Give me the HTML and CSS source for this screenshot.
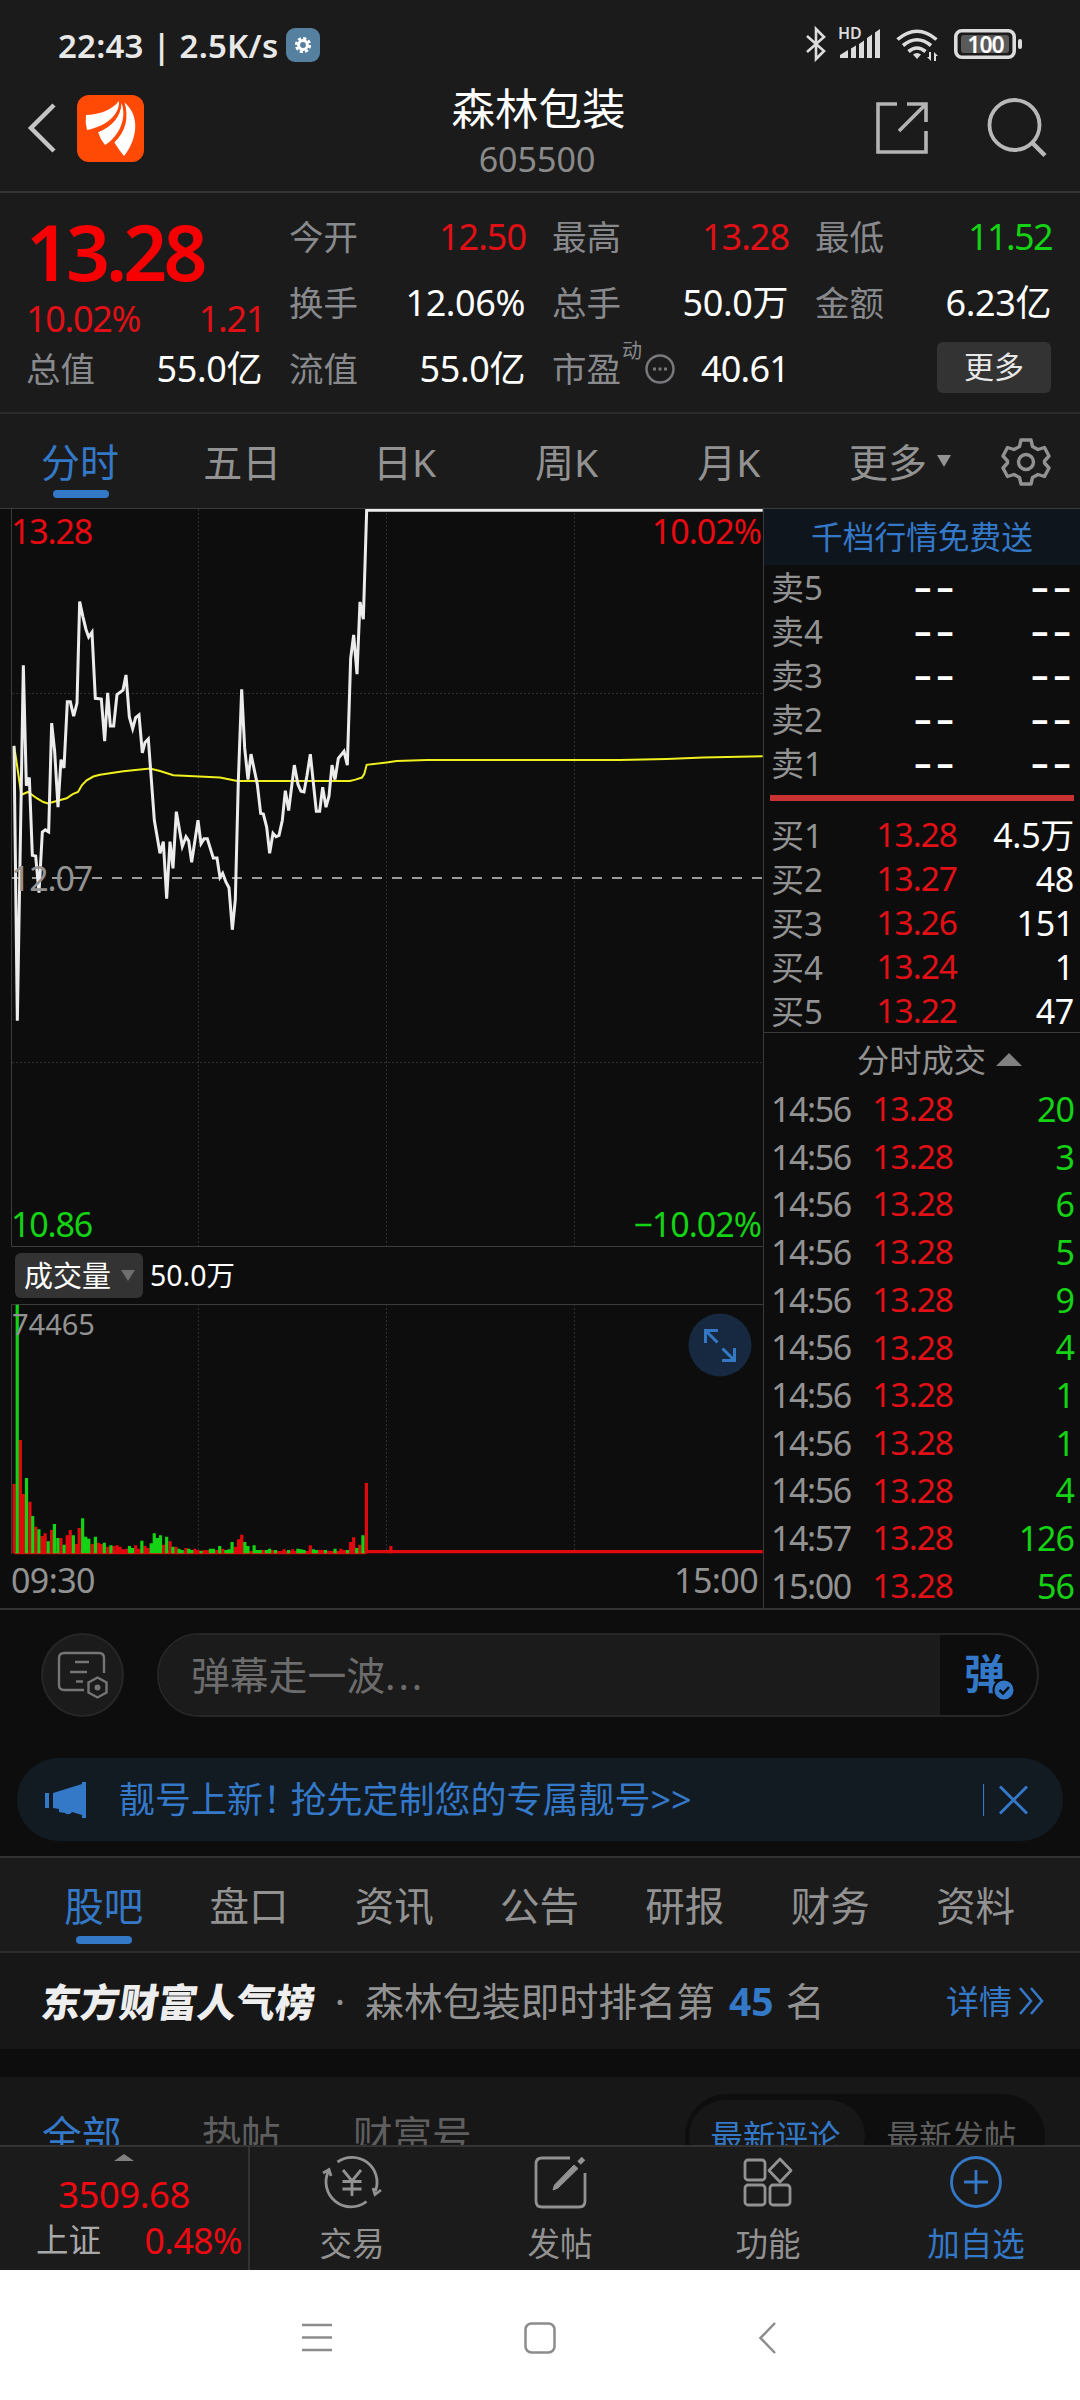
FILE: index.html
```html
<!DOCTYPE html>
<html lang="zh-CN">

<head>
    <meta charset="UTF-8">
    <meta name="viewport" content="width=device-width, initial-scale=1.0">
    <title>森林包装 605500</title>
    <link rel="stylesheet" href="styles.css">
</head>

<body>
    <div class="phone">
        <!--状态栏-->
        <div class="status">
            <span class="time">22:43 | 2.5K/s</span>
            <svg class="gear-app" width="34" height="34" viewBox="0 0 34 34">
                <rect width="34" height="34" rx="9" fill="#55809f"/>
                <circle cx="17" cy="17" r="6.8" fill="none" stroke="#fff" stroke-width="2.6" stroke-dasharray="3.2 2.14"/>
                <circle cx="17" cy="17" r="4.4" fill="none" stroke="#fff" stroke-width="3"/>
            </svg>
            <svg class="status-icons" width="220" height="40" viewBox="0 0 220 40">
                <path d="M5 11L22 26L14 34V4L22 12L5 27" fill="none" stroke="#dcdcdc" stroke-width="2.6"/>
                <text x="36" y="14" class="hd">HD</text>
                <g fill="#dcdcdc">
                    <path d="M38 33V30L46 25V33Z"/>
                    <path d="M49 23.500L54 20.500V33H49Z"/>
                    <path d="M57 19L62 15.500V33H57Z"/>
                    <path d="M65 13L70 9.500V33H65Z"/>
                    <path d="M73 7.500L78 4V33H73Z"/>
                    <path d="M111 29.500q4-3 8 0l-4 4.500z"/>
                    <path d="M127 27h2v9l-4-4h2zM134 36h-2v-9l4 4h-2z"/>
                </g>
                <g fill="none" stroke="#dcdcdc" stroke-width="3.600">
                    <path d="M95.500 14.500Q115 -2 134.500 14.500"/>
                    <path d="M101 20.500Q115 9 129 20.500"/>
                    <path d="M106.500 26.500Q115 19.500 123.500 26.500"/>
                </g>
                <rect x="153.800" y="5.800" width="58.400" height="26.400" rx="6" fill="none" stroke="#dcdcdc" stroke-width="3.600"/>
                <rect x="159" y="10" width="48" height="18" rx="3" fill="#5a5a5a"/>
                <text x="183.500" y="27.500" class="bat">100</text>
                <rect x="216" y="14" width="4" height="10" rx="2" fill="#dcdcdc"/>
            </svg>
        </div>

        <!--标题-->
        <div class="header">
            <svg class="back" width="30" height="52" viewBox="0 0 30 52">
                <path d="M27 3L4 26L27 49" fill="none" stroke="#c4c4c4" stroke-width="4.500"/>
            </svg>
            <svg class="logo" width="67" height="67" viewBox="0 0 67 67">
                <rect width="67" height="67" rx="12" fill="#ff4a06"/>
                <g fill="#fff">
                    <path d="M9 20C21 20 35 15 42 6C43 18 31 31 10 35Q8 28 9 20Z"/>
                    <path d="M21 37C34 32 44 22 44.500 8C50 22 43 41 28 50Q23 44 21 37Z"/>
                    <path d="M37 47C48 35 52 23 47 7C64 21 60 45 47 61Q42 55 37 47Z"/>
                </g>
                <path d="M20.500 36.500C34 31 43 21 43.500 7M36.500 47C48 36 51 22 46.500 7" fill="none" stroke="#ff4a06" stroke-width="1.800"/>
            </svg>
            <div class="name">
                <h1>森林包装</h1>
                <p>605500</p>
            </div>
            <svg class="share" width="54" height="54" viewBox="0 0 54 54">
                <path d="M22 3H3V51H51V30M32 3H51V21M51 3L24 30" fill="none" stroke="#b4b4b4" stroke-width="3.600"/>
            </svg>
            <svg class="search" width="60" height="60" viewBox="0 0 60 60">
                <circle cx="27.500" cy="27" r="25" fill="none" stroke="#b8b8b8" stroke-width="3.800"/>
                <path d="M44.500 44L58 57.500" stroke="#b8b8b8" stroke-width="4.500"/>
            </svg>
        </div>

        <!--行情-->
        <div class="quote">
            <div class="col first">
                <div class="price">13.28</div>
                <div class="change red"><span>10.02%</span><span>1.21</span></div>
                <div class="item"><label>总值</label><b>55.0亿</b></div>
            </div>
            <div class="col">
                <div class="item"><label>今开</label><b class="red">12.50</b></div>
                <div class="item"><label>换手</label><b>12.06%</b></div>
                <div class="item"><label>流值</label><b>55.0亿</b></div>
            </div>
            <div class="col">
                <div class="item"><label>最高</label><b class="red">13.28</b></div>
                <div class="item"><label>总手</label><b>50.0万</b></div>
                <div class="item">
                    <label class="pe">市盈<sup>动</sup>
                        <svg width="32" height="32" viewBox="0 0 32 32">
                            <circle cx="16" cy="16" r="13.500" fill="none" stroke="#77787b" stroke-width="2.500"/>
                            <path d="M9 16h3M14.500 16h3M20 16h3" stroke="#77787b" stroke-width="3"/>
                        </svg>
                    </label>
                    <b class="tight">40.61</b>
                </div>
            </div>
            <div class="col">
                <div class="item"><label>最低</label><b class="green">11.52</b></div>
                <div class="item"><label>金额</label><b>6.23亿</b></div>
                <div class="item right"><span class="more">更多</span></div>
            </div>
        </div>

        <!--周期切换-->
        <div class="period">
            <span class="on">分时</span>
            <span>五日</span>
            <span>日K</span>
            <span>周K</span>
            <span>月K</span>
            <span class="drop">更多<i></i></span>
            <svg width="50" height="50" viewBox="0 0 50 50">
                <g fill="none" stroke="#929292" stroke-width="3.400" stroke-linejoin="round">
                    <path d="M20 3H30L31.500 9.500L37 12.500L43.500 10.500L48 19L43.500 24V26L48 31L43.500 39.500L37 37.500L31.500 40.500L30 47H20L18.500 40.500L13 37.500L6.500 39.500L2 31L6.500 26V24L2 19L6.500 10.500L13 12.500L18.500 9.500Z"/>
                    <circle cx="25" cy="25" r="7.500"/>
                </g>
            </svg>
        </div>

        <div class="main">
            <div class="charts">
                <svg class="trend" width="763" height="738" viewBox="0 0 763 738">
                    <path class="dotted" d="M198.500 0V737M386.500 0V737M574.500 0V737M12 184.500H763M12 553.500H763"/>
                    <path class="frame" d="M11.500 0V737.500H763"/>
                    <path class="middle" d="M12 369H763"/>
                    <g transform="translate(0,-9) scale(.33333,.34435)">
                        <polyline class="avg" points="42,714 48,750 64,856 84,848 110,866 130,877 144,881 170,874 200,866 218,854 234,848 246,828 260,814 280,803 300,798 370,788 450,780 480,787 520,799 660,806 712,816 1050,816 1066,812 1086,806 1093,795 1100,769 1160,762 1190,758 1280,755 1860,755 2000,752 2110,748 2288,744"/>
                        <polyline class="now" points="42,714 52,1512 70,480 79,830 88,806 97,1032 107,1034 117,1140 127,964 136,958 146,964 155,648 164,730 174,892 183,754 192,778 202,586 211,586 221,628 231,590 239,295 249,340 258,376 266,398 276,384 286,576 304,578 314,700 323,560 331,656 341,656 351,565 369,552 378,508 388,630 398,664 407,632 417,624 427,734 435,704 445,694 463,930 480,1026 490,992 500,1158 510,992 519,1070 529,905 547,1006 558,978 566,990 575,1052 594,930 603,998 612,984 622,984 640,1040 651,1040 660,1096 668,1084 678,1110 687,1126 697,1248 706,1160 715,815 725,550 734,720 744,812 753,738 772,826 782,910 790,912 800,950 809,1026 819,968 828,978 837,974 847,930 856,844 866,902 883,770 894,826 903,846 912,848 921,800 931,738 949,904 959,904 968,834 978,892 987,860 996,770 1005,812 1015,750 1032,730 1042,770 1052,460 1061,392 1071,506 1080,296 1090,346 1100,30 2288,30"/>
                    </g>
                    <text class="r" x="11" y="35">13.28</text>
                    <text class="r end" x="761" y="35">10.02%</text>
                    <text class="mid" x="11" y="382">12.07</text>
                    <text class="g" x="11" y="728">10.86</text>
                    <text class="g end" x="761" y="728">−10.02%</text>
                </svg>
                <div class="vol-head">
                    <span class="select">成交量<i></i></span>
                    <span>50.0万</span>
                </div>
                <div class="vol-wrap">
                    <svg class="volume" width="763" height="251" viewBox="0 0 763 251">
                        <path class="dotted" d="M198.500 0V249M386.500 0V249M574.500 0V249"/>
                        <path class="frame" d="M11.500 250V.5H763"/>
                        <g transform="translate(0,-104) scale(.34435,.33333)">
                            <path class="up" d="M41 1060V852M59 1060V720M68 1060V882M87 1060V905M104 1060V980M122 1060V1008M131 1060V1000M150 1060V990M177 1060V1014M195 1060V1006M204 1060V990M222 1060V1032M230 1060V984M268 1060V1032M286 1060V1028M295 1060V1032M313 1060V1040M330 1060V1038M340 1060V1036M349 1060V1040M358 1060V1048M368 1060V1046M394 1060V1036M403 1060V1046M421 1060V1038M430 1060V1044M475 1060V1034M494 1060V1024M511 1060V1040M540 1060V1044M566 1060V1046M575 1060V1050M593 1060V1050M603 1060V1050M630 1060V1050M647 1060V1046M684 1060V1040M693 1060V1018M702 1060V1004M765 1060V1050M790 1060V1050M825 1060V1048M850 1060V1048M901 1060V1036M928 1060V1050M936 1060V1050M955 1060V1052M990 1060V1046M1000 1060V1050M1018 1060V1026M1027 1060V1012M1045 1060V1034M1064 1060V849M1135 1060V1038"/>
                            <path class="up" d="M41 1058H1064M1064 1055H2215"/>
                            <path class="down" d="M50 1060V314M77 1060V834M95 1060V948M113 1060V988M140 1060V1024M158 1060V972M168 1060V1014M186 1060V1034M213 1060V1006M240 1060V955M249 1060V1010M258 1060V1016M277 1060V1010M303 1060V1028M322 1060V1036M376 1060V1038M385 1060V1044M412 1060V1022M439 1060V1030M448 1060V1000M457 1060V1014M466 1060V1006M484 1060V1010M502 1060V1040M520 1060V1046M529 1060V1050M548 1060V1046M557 1060V1050M584 1060V1052M611 1060V1046M620 1060V1046M638 1060V1038M656 1060V1050M665 1060V1048M674 1060V1026M711 1060V1026M720 1060V1038M738 1060V1036M747 1060V1050M756 1060V1050M774 1060V1050M783 1060V1046M800 1060V1050M838 1060V1050M865 1060V1046M874 1060V1048M883 1060V1050M910 1060V1048M919 1060V1050M945 1060V1050M973 1060V1046M1009 1060V1050M1036 1060V1044M1054 1060V1006"/>
                        </g>
                        <text class="mid small" x="12" y="31">74465</text>
                    </svg>
                    <svg class="expand" width="64" height="64" viewBox="0 0 64 64">
                        <circle cx="32" cy="32" r="31.500" fill="#172940"/>
                        <path d="M17.500 30V17.500H30M18 18L29.500 29.500M46.500 35V47.500H34M46 47L34.500 35.500" fill="none" stroke="#3478c4" stroke-width="3"/>
                    </svg>
                </div>
                <div class="hours"><span>09:30</span><span>15:00</span></div>
            </div>

            <!--五档-->
            <div class="side">
                <div class="promo">千档行情免费送</div>
                <ul class="sell">
                    <li><span>卖5</span><em>--</em><b>--</b></li>
                    <li><span>卖4</span><em>--</em><b>--</b></li>
                    <li><span>卖3</span><em>--</em><b>--</b></li>
                    <li><span>卖2</span><em>--</em><b>--</b></li>
                    <li><span>卖1</span><em>--</em><b>--</b></li>
                </ul>
                <div class="bar"></div>
                <ul class="buy">
                    <li><span>买1</span><em>13.28</em><b>4.5万</b></li>
                    <li><span>买2</span><em>13.27</em><b>48</b></li>
                    <li><span>买3</span><em>13.26</em><b>151</b></li>
                    <li><span>买4</span><em>13.24</em><b>1</b></li>
                    <li><span>买5</span><em>13.22</em><b>47</b></li>
                </ul>
                <div class="tick-title">分时成交<i></i></div>
                <ul class="ticks">
                    <li><span>14:56</span><em>13.28</em><b>20</b></li>
                    <li><span>14:56</span><em>13.28</em><b>3</b></li>
                    <li><span>14:56</span><em>13.28</em><b>6</b></li>
                    <li><span>14:56</span><em>13.28</em><b>5</b></li>
                    <li><span>14:56</span><em>13.28</em><b>9</b></li>
                    <li><span>14:56</span><em>13.28</em><b>4</b></li>
                    <li><span>14:56</span><em>13.28</em><b>1</b></li>
                    <li><span>14:56</span><em>13.28</em><b>1</b></li>
                    <li><span>14:56</span><em>13.28</em><b>4</b></li>
                    <li><span>14:57</span><em>13.28</em><b>126</b></li>
                    <li><span>15:00</span><em>13.28</em><b>56</b></li>
                </ul>
            </div>
        </div>

        <!--弹幕-->
        <div class="danmu">
            <div class="round">
                <svg width="54" height="50" viewBox="0 0 54 50" fill="none" stroke="#757575" stroke-width="2.400">
                    <path d="M28 40H8Q3 40 3 35V8Q3 3 8 3H43Q48 3 48 8V23M19 12H33M14 22H31M20 31.500H27"/>
                    <path d="M41.500 27.500L50.500 32.500V42.500L41.500 47.500L32.500 42.500V32.500Z"/>
                    <circle cx="41.500" cy="37.500" r="1.800" fill="#757575"/>
                </svg>
            </div>
            <div class="input">
                <span class="hint">弹幕走一波<span class="dots">...</span></span>
                <span class="switch">弹
                    <svg width="24" height="24" viewBox="0 0 24 24">
                        <circle cx="12" cy="12" r="10.500" fill="#3478c8" stroke="#0d0d0d" stroke-width="2"/>
                        <path d="M7.500 12L11 15.500L17 9" fill="none" stroke="#0d0d0d" stroke-width="2.500"/>
                    </svg>
                </span>
            </div>
        </div>

        <div class="notice">
            <svg width="42" height="38" viewBox="0 0 42 38" fill="#3478c8">
                <path d="M0 12H4V27H0ZM8 12L37 3V1H41V37H37V34L27 31Q24 35 20 32L14 31V28L8 27Z"/>
            </svg>
            <span class="msg">靓号上新<span class="mark">！</span>抢先定制您的专属靓号&gt;&gt;</span>
            <svg class="close" width="46" height="32" viewBox="0 0 46 32" fill="none" stroke="#3478c8">
                <path d="M.5 0V32" stroke-width="1.200"/>
                <path d="M17 2.500L44 29.500M44 2.500L17 29.500" stroke-width="3"/>
            </svg>
        </div>

        <div class="tabs">
            <span class="on">股吧</span>
            <span>盘口</span>
            <span>资讯</span>
            <span>公告</span>
            <span>研报</span>
            <span>财务</span>
            <span>资料</span>
        </div>

        <div class="rank">
            <span class="brand">东方财富人气榜</span>
            <span class="dot">·</span>
            <span class="text">森林包装即时排名第<strong>45</strong>名</span>
            <span class="detail">详情
                <svg width="28" height="30" viewBox="0 0 28 30" fill="none" stroke="#3478c8" stroke-width="2.600">
                    <path d="M2 2L13 15L2 28M13 2L24 15L13 28"/>
                </svg>
            </span>
        </div>

        <div class="posts">
            <span class="on">全部</span>
            <span>热帖</span>
            <span class="cfh">财富号</span>
            <div class="sort"><span class="on">最新评论</span><span>最新发帖</span></div>
        </div>

        <!--底部-->
        <div class="bottom">
            <div class="index">
                <i></i>
                <p class="red point">3509.68</p>
                <p class="line"><span>上证</span><span class="red">0.48%</span></p>
            </div>
            <div class="btn">
                <svg width="60" height="54" viewBox="0 0 60 54" fill="none" stroke="#929292" stroke-width="2.800">
                    <path d="M15.500 7A25 25 0 0 1 53.500 36M44.500 46.500A25 25 0 0 1 6.500 16M1 18L7 14.500L9 21M59 35L53 39.500L51 33"/>
                    <path d="M21 15L30 26L39 15M30 26V41M20.500 26.500H39.500M20.500 34H39.500"/>
                </svg>
                <span>交易</span>
            </div>
            <div class="btn">
                <svg width="60" height="54" viewBox="0 0 60 54" fill="none" stroke="#929292" stroke-width="2.800">
                    <path d="M40 3H12Q6 3 6 9V46Q6 52 12 52H49Q55 52 55 46V18"/>
                    <path d="M49 8L53.500 3.500" stroke-width="5"/>
                    <path d="M44 10L48 13.500L28 33L23 35L24.500 30Z" fill="#929292" stroke-width="1"/>
                </svg>
                <span>发帖</span>
            </div>
            <div class="btn">
                <svg width="60" height="54" viewBox="0 0 60 54" fill="none" stroke="#929292" stroke-width="2.800">
                    <rect x="7" y="5" width="20" height="20" rx="3"/>
                    <rect x="7" y="30" width="20" height="20" rx="3"/>
                    <rect x="32" y="30" width="20" height="20" rx="3"/>
                    <path d="M42 4L53 15.500L42 27L31 15.500Z" stroke-linejoin="round"/>
                </svg>
                <span>功能</span>
            </div>
            <div class="btn add">
                <svg width="60" height="54" viewBox="0 0 60 54" fill="none" stroke="#3478c8" stroke-width="2.800">
                    <circle cx="30" cy="27" r="24.500"/>
                    <path d="M30 15V39M18 27H42"/>
                </svg>
                <span>加自选</span>
            </div>
        </div>

        <!--系统导航-->
        <div class="nav">
            <svg width="32" height="32" viewBox="0 0 32 32"><path d="M1 3H31M1 15.500H31M1 28H31"/></svg>
            <svg width="32" height="32" viewBox="0 0 32 32"><rect x="1.500" y="1.500" width="29" height="29" rx="6"/></svg>
            <svg width="32" height="32" viewBox="0 0 32 32"><path d="M28 1L13.500 16L28 31"/></svg>
        </div>
    </div>
</body>

</html>
```
FILE: styles.css
```css
/*
    基本样式
*/
* {
    box-sizing: border-box;
}

body,
h1,
p,
ul,
li {
    margin: 0;
    padding: 0;
}

ul {
    list-style: none;
}

b,
em,
i {
    font-weight: normal;
    font-style: normal;
}

svg {
    display: block;
    flex: none;
}

body {
    background-color: #fff;
    color: #929292;
    font-family: "Noto Sans", "Noto Sans CJK SC", sans-serif;
    line-height: 1;
}

.phone {
    display: flex;
    flex-direction: column;
    width: 1080px;
    height: 2400px;
    overflow: hidden;
    background-color: #0d0d0d;
    white-space: nowrap;
}

.red {
    color: #ee0a12;
}

.green {
    color: #14d214;
}

/*
    状态栏和标题
*/
.status {
    display: flex;
    align-items: center;
    height: 90px;
    padding: 0 58px;
    background-color: #1b1b1b;
    color: #e8e8e8;
}

.status .time {
    width: 222px;
    font-size: 33px;
    font-weight: 600;
    letter-spacing: 0.2px;
}

.status .gear-app {
    margin-left: 6px;
}

.status .status-icons {
    margin-left: auto;
}

.status .hd {
    font-size: 16px;
    font-weight: 600;
    fill: #dcdcdc;
}

.status .bat {
    font-size: 23px;
    font-weight: 600;
    letter-spacing: -1px;
    text-anchor: middle;
    fill: #fff;
}

.header {
    display: grid;
    grid-template-columns: 50px 276px 374px 202px auto;
    align-items: center;
    height: 103px;
    padding: 0 27px 31px;
    border-bottom: 2px solid #333;
    background-color: #1b1b1b;
}

.header svg {
    margin-top: -9px;
}

.header .name {
    margin: -3px 3px 0 0;
    text-align: center;
}

.header h1 {
    font-size: 43.500px;
    font-weight: normal;
    color: #fff;
}

.header p {
    margin: 11px 3px 0 0;
    font-size: 34px;
    line-height: 34px;
    color: #8a8a8a;
}

.header .share {
    margin-left: 148px;
}

.header .search {
    margin-left: 58px;
}

/*
    行情
*/
.quote {
    display: grid;
    grid-template-columns: repeat(4, 236px);
    column-gap: 27px;
    height: 221px;
    padding: 11px 27px 0 26px;
    border-bottom: 2px solid #2c2c2c;
    background-color: #1b1b1b;
}

.quote .item {
    display: flex;
    justify-content: space-between;
    align-items: center;
    height: 66px;
    font-size: 36px;
}

.quote label {
    font-size: 34.500px;
    color: #88898c;
}

.quote b {
    letter-spacing: -0.4px;
    color: #fff;
}

.quote b.red {
    margin-right: -1px;
    letter-spacing: -1px;
    color: #e01016;
}

.quote b.green {
    margin-right: -1px;
    letter-spacing: -1.600px;
    color: #14d214;
}

.quote b.tight {
    margin-right: -1px;
    letter-spacing: -0.800px;
}

.quote .price {
    height: 97px;
    line-height: 95px;
    font-size: 77px;
    font-weight: 600;
    letter-spacing: -4px;
    color: #f60004;
}

.quote .change {
    display: flex;
    justify-content: space-between;
    align-items: center;
    height: 35px;
    margin-right: -3px;
    font-size: 36px;
    letter-spacing: -1.300px;
    color: #e01016;
}

.quote .pe {
    display: flex;
    align-items: center;
}

.quote sup {
    align-self: flex-start;
    margin: -11px 0 0 1px;
    font-size: 20px;
}

.quote .pe svg {
    margin-left: 2px;
}

.quote .right {
    justify-content: flex-end;
}

.quote .more {
    width: 114px;
    height: 51px;
    margin-top: -4px;
    border-radius: 6px;
    background-color: #333;
    line-height: 50px;
    text-align: center;
    font-size: 30px;
    color: #e8e8e8;
}

/*
    周期切换
*/
.period {
    display: flex;
    height: 94px;
    background-color: #1b1b1b;
    font-size: 39px;
}

.period span {
    position: relative;
    width: 162.200px;
    padding-right: 2px;
    line-height: 95px;
    text-align: center;
}

.period .drop {
    padding-left: 18px;
}

.period .drop i {
    display: inline-block;
    margin: 0 0 10px 10px;
    border: 7px solid transparent;
    border-top: 12px solid #929292;
    border-bottom: 0;
}

.period svg {
    margin: 23px 0 0 28px;
}

.period .on,
.tabs .on {
    color: #3478c8;
}

.period .on::after,
.tabs .on::after {
    position: absolute;
    left: 50%;
    bottom: 10px;
    width: 56px;
    height: 8px;
    margin-left: -28px;
    border-radius: 4px;
    background-color: #3478c8;
    content: "";
}

/*
    分时图
*/
.main {
    display: flex;
    height: 1102px;
    border-top: 1px solid #3a3a3a;
    border-bottom: 2px solid #333;
}

.charts {
    width: 764px;
    border-right: 1px solid #3a3a3a;
}

.charts text {
    font-size: 34px;
    letter-spacing: -1.2px;
}

.charts .end {
    text-anchor: end;
    letter-spacing: -1px;
}

.charts .r {
    fill: #e80a12;
}

.charts .g {
    fill: #14d214;
}

.charts .mid {
    fill: #929292;
}

.charts .small {
    font-size: 29px;
    letter-spacing: 0;
}

.dotted,
.frame,
.middle,
.avg,
.now,
.up,
.down {
    fill: none;
    vector-effect: non-scaling-stroke;
}

.dotted {
    stroke: #303030;
    stroke-dasharray: 2 2;
}

.frame {
    stroke: #3c3c3c;
}

.middle {
    stroke: #9a9a9a;
    stroke-width: 2;
    stroke-dasharray: 10 10;
}

.avg {
    stroke: #f0f01e;
    stroke-width: 2;
}

.now {
    stroke: #ececec;
    stroke-width: 3;
}

.up {
    stroke: #e00a0e;
    stroke-width: 3.200;
}

.down {
    stroke: #14d214;
    stroke-width: 3.200;
}

.vol-head {
    display: flex;
    align-items: center;
    gap: 7px;
    height: 57px;
    padding-left: 15px;
    font-size: 28.500px;
    color: #fff;
}

.vol-head .select {
    display: flex;
    align-items: center;
    gap: 10px;
    width: 128px;
    height: 45px;
    padding-left: 9px;
    border-radius: 6px;
    background-color: #333;
    font-size: 29px;
}

.vol-head i {
    border: 7px solid transparent;
    border-top: 11px solid #6e6e6e;
    border-bottom: 0;
}

.vol-wrap {
    position: relative;
}

.vol-wrap .expand {
    position: absolute;
    top: 9px;
    right: 11px;
}

.hours {
    display: flex;
    justify-content: space-between;
    padding: 8px 5px 0 11px;
    font-size: 34px;
    letter-spacing: -0.6px;
}

/*
    五档和成交明细
*/
.side {
    flex: 1;
}

.promo {
    height: 56px;
    background-color: #0f151c;
    line-height: 56px;
    text-align: center;
    font-size: 31.700px;
    color: #3478c8;
}

.side li {
    display: grid;
    grid-template-columns: 80px 106px 1fr;
    align-items: center;
    height: 44px;
    padding: 0 6px 0 7px;
    font-size: 34px;
    letter-spacing: -1px;
}

.side em,
.side b {
    text-align: right;
}

.side em {
    font-size: 33.500px;
    letter-spacing: -1px;
    color: #e01016;
}

.side b {
    color: #fff;
}

.sell span,
.buy span {
    font-size: 33px;
    letter-spacing: 0;
}

.side .sell em,
.side .sell b {
    color: #fff;
    font-family: Inter, sans-serif;
    font-size: 45px;
    letter-spacing: 1.500px;
}

.side .bar {
    height: 6px;
    margin: 10px 6px 12px;
    background-color: #c83232;
}

.side .buy b {
    letter-spacing: -0.3px;
}

.tick-title {
    display: flex;
    justify-content: center;
    align-items: center;
    gap: 10px;
    height: 53px;
    margin-top: -1px;
    padding-left: 35px;
    border-top: 1px solid #3a3a3a;
    font-size: 32.300px;
}

.tick-title i {
    border: 13px solid transparent;
    border-bottom: 13px solid #808080;
    border-top: 0;
}

.side .ticks li {
    grid-template-columns: 80px 102px 1fr;
    height: 47.700px;
}

.side .ticks span {
    letter-spacing: -1.400px;
}

.side .ticks b {
    color: #14d214;
}

/*
    弹幕和公告
*/
.danmu {
    display: flex;
    gap: 33px;
    padding: 23px 41px 0;
}

.danmu .round {
    display: flex;
    justify-content: center;
    align-items: center;
    width: 83px;
    height: 84px;
    border: 2px solid #262626;
    border-radius: 50%;
    background-color: #1b1b1b;
}

.danmu .input {
    display: flex;
    flex: 1;
    height: 84px;
    border: 2px solid #262626;
    border-radius: 42px;
    overflow: hidden;
    line-height: 80px;
}

.danmu .hint {
    flex: 1;
    padding-left: 32px;
    background-color: #1b1b1b;
    font-size: 38.800px;
    color: #6c6c6c;
}

.danmu .dots {
    letter-spacing: 3px;
}

.danmu .switch {
    position: relative;
    width: 97px;
    padding-left: 24px;
    font-size: 41px;
    font-weight: bold;
    line-height: 77px;
    color: #3478c8;
}

.danmu .switch svg {
    position: absolute;
    left: 52px;
    top: 43px;
}

.notice {
    display: flex;
    align-items: center;
    height: 83px;
    margin: 41px 17px 0;
    padding: 0 34px 0 28px;
    border-radius: 42px;
    background-color: #121a22;
    font-size: 36px;
    color: #3478c8;
}

.notice .msg {
    margin-left: 32px;
}

.notice .mark {
    letter-spacing: -8.500px;
}

.notice .close {
    margin-left: auto;
}

/*
    股吧
*/
.tabs {
    display: flex;
    height: 97px;
    margin-top: 15px;
    padding-left: 31px;
    border-top: 2px solid #333;
    border-bottom: 2px solid #2c2c2c;
    background-color: #1b1b1b;
    line-height: 97px;
    font-size: 39.500px;
}

.tabs span {
    position: relative;
    width: 145.300px;
    text-align: center;
}

.tabs .on::after {
    bottom: 7px;
}

.rank {
    display: flex;
    align-items: center;
    height: 96px;
    padding: 0 34px 0 42px;
    background-color: #171717;
    font-size: 38.900px;
}

.rank .brand {
    width: 273px;
    font-size: 39px;
    font-weight: 900;
    color: #eee;
    transform: skewX(-8deg);
}

.rank .dot {
    width: 50px;
    text-align: center;
}

.rank strong {
    margin: 0 12px 0 14px;
    font-size: 39px;
    color: #3478c8;
}

.rank .detail {
    display: flex;
    align-items: center;
    gap: 6px;
    margin-left: auto;
    font-size: 33px;
    color: #3478c8;
}

.posts {
    display: flex;
    gap: 80px;
    height: 68px;
    margin-top: 28px;
    padding: 0 35px 0 42px;
    overflow: hidden;
    background-color: #171717;
    line-height: 117px;
    font-size: 39.700px;
    color: #5e5e5e;
}

.posts .on {
    color: #3478c8;
}

.posts .cfh {
    margin-left: -8px;
}

.posts .sort {
    display: flex;
    width: 360px;
    height: 84px;
    margin: 17px 0 0 auto;
    padding: 6px 4px;
    border-radius: 42px;
    background-color: #0e0e0e;
    font-size: 32.500px;
}

.sort span {
    flex: 1;
    height: 72px;
    padding-right: 3px;
    border-radius: 36px;
    line-height: 73px;
    text-align: center;
}

.sort .on {
    background-color: #171717;
}

/*
    底部
*/
.bottom {
    display: flex;
    height: 125px;
    border-top: 2px solid #333;
    background-color: #1b1b1b;
}

.bottom .index {
    width: 250px;
    border-right: 2px solid #333;
    color: #a8a8a8;
}

.bottom .index i {
    display: block;
    width: 0;
    margin: 7px auto 0;
    border: 10px solid transparent;
    border-bottom: 7px solid #808080;
    border-top: 0;
}

.bottom .point {
    margin-top: 15px;
    text-align: center;
    font-size: 36.500px;
    line-height: 36px;
    letter-spacing: -0.5px;
}

.bottom .line {
    display: flex;
    justify-content: space-between;
    margin-top: 10px;
    padding: 0 6px 0 36px;
    font-size: 32.500px;
    line-height: 36px;
}

.bottom .line .red {
    font-size: 35.500px;
    letter-spacing: -0.500px;
}

.bottom .btn {
    display: flex;
    flex: 1;
    flex-direction: column;
    align-items: center;
    padding: 8px 4px 0 0;
    font-size: 32.500px;
}

.bottom .btn span {
    margin-top: 19px;
}

.bottom .add {
    padding-right: 2px;
    color: #3478c8;
}

.nav {
    display: flex;
    justify-content: center;
    gap: 191px;
    height: 130px;
    padding-top: 52px;
    background-color: #fff;
}

.nav svg {
    fill: none;
    stroke: #8c8c8c;
    stroke-width: 2.500;
}
```
